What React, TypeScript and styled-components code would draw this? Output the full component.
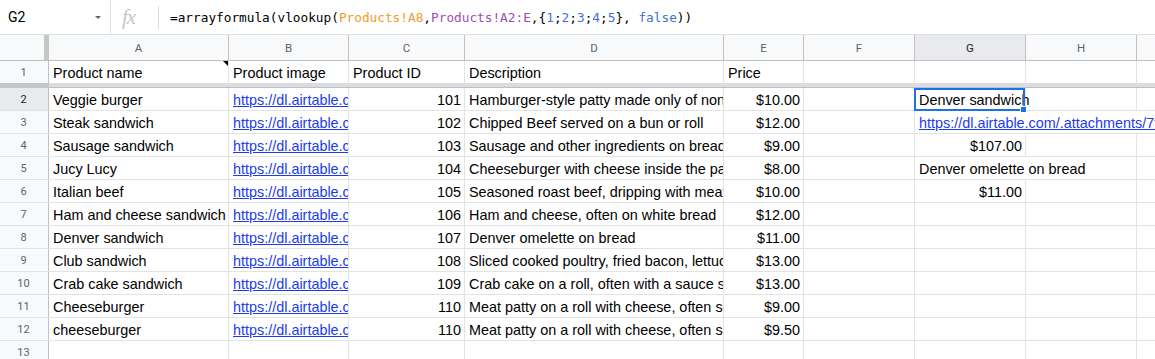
import React from "react";
import styled, { createGlobalStyle } from "styled-components";

const GlobalStyle = createGlobalStyle`
  html, body { margin: 0; padding: 0; background: #fff; overflow: hidden; }
  body { font-family: "Liberation Sans", Arial, sans-serif; }
`;

const Page = styled.div`
  width: 1155px;
  height: 359px;
  overflow: hidden;
  background: #fff;
`;

/* ---------- formula bar ---------- */
const FormulaBar = styled.div`
  display: flex;
  align-items: stretch;
  height: 35px;
  box-sizing: border-box;
  border-bottom: 1px solid #e0e0e0;
`;

const NameBox = styled.div`
  width: 111px;
  flex: none;
  box-sizing: border-box;
  border-right: 1px solid #e0e0e0;
  display: flex;
  align-items: center;
  justify-content: space-between;
  padding: 0 9px 0 8px;
`;

const NameText = styled.span`
  font-family: Roboto, "Liberation Sans", Arial, sans-serif;
  font-size: 14px;
  color: #000;
`;

const FxBox = styled.div`
  width: 47px;
  flex: none;
  display: flex;
  align-items: center;
  padding-left: 11px;
  box-sizing: border-box;
`;

const FxGlyph = styled.span`
  font-family: "Liberation Serif", "DejaVu Serif", serif;
  font-style: italic;
  font-size: 21px;
  color: #c4c7c5;
  letter-spacing: -1px;
  line-height: 1;
`;

const FxDivider = styled.div`
  width: 1px;
  height: 23px;
  align-self: center;
  background: #dadce0;
  flex: none;
`;

const FormulaText = styled.div`
  display: flex;
  align-items: center;
  padding-left: 11px;
  font-family: "DejaVu Sans Mono", "Liberation Mono", monospace;
  font-size: 12.75px;
  color: #000;
  white-space: pre;
`;

const Tok = styled.span<{ $c?: string }>`
  color: ${(p) => p.$c || "#000"};
`;

/* ---------- grid ---------- */
const Sheet = styled.div`
  display: flex;
  flex-direction: column;
  font-size: 14.4px;
  color: #000;
`;

const HeaderRow = styled.div`
  display: flex;
  height: 26px;
  box-sizing: border-box;
  border-bottom: 1px solid #c0c0c0;
  background: #f8f9fa;
`;

const Corner = styled.div`
  width: 49px;
  flex: none;
  box-sizing: border-box;
  border-right: 5px solid #c4c7c5;
`;

const ColHeader = styled.div<{ $w: number; $active?: boolean }>`
  width: ${(p) => p.$w}px;
  flex: none;
  box-sizing: border-box;
  border-right: 1px solid #c0c0c0;
  display: flex;
  align-items: center;
  justify-content: center;
  font-family: Roboto, "Liberation Sans", Arial, sans-serif;
  font-size: 11.5px;
  color: ${(p) => (p.$active ? "#202124" : "#5f6368")};
  background: ${(p) => (p.$active ? "#e8eaed" : "#f8f9fa")};
`;

const Row = styled.div<{ $first?: boolean }>`
  display: flex;
  height: ${(p) => (p.$first ? "22px" : "23px")};
  box-sizing: border-box;
  border-bottom: ${(p) => (p.$first ? "none" : "1px solid #e2e3e3")};
`;

const RowHead = styled.div<{ $active?: boolean }>`
  width: 49px;
  flex: none;
  box-sizing: border-box;
  border-right: 1px solid #c0c0c0;
  background: ${(p) => (p.$active ? "#e8eaed" : "#f8f9fa")};
  color: ${(p) => (p.$active ? "#202124" : "#5f6368")};
  font-family: Roboto, "Liberation Sans", Arial, sans-serif;
  font-size: 11px;
  display: flex;
  align-items: center;
  justify-content: center;
  padding-right: 1px;
`;

const Cell = styled.div<{
  $w: number;
  $right?: boolean;
  $spill?: boolean;
  $noRight?: boolean;
}>`
  width: ${(p) => p.$w}px;
  flex: none;
  box-sizing: border-box;
  height: 100%;
  position: relative;
  border-right: 1px solid ${(p) => (p.$noRight ? "transparent" : "#e2e3e3")};
  padding: 2px 3px 0 4px;
  display: flex;
  align-items: center;
  justify-content: ${(p) => (p.$right ? "flex-end" : "flex-start")};
  overflow: ${(p) => (p.$spill ? "visible" : "hidden")};
  white-space: nowrap;
  z-index: ${(p) => (p.$spill ? 1 : 0)};
`;

const CellText = styled.span`
  flex: none;
`;

const LinkText = styled.span`
  flex: none;
  color: #1a3bf0;
  text-decoration: underline;
`;

const NoteMark = styled.span`
  position: absolute;
  top: 0;
  right: -1px;
  width: 0;
  height: 0;
  border-left: 6px solid transparent;
  border-top: 6px solid #000;
`;

const SelectionBox = styled.span`
  position: absolute;
  top: 0;
  left: -1px;
  right: 0;
  bottom: -1px;
  border: 2px solid #1a73e8;
  pointer-events: none;
`;

const FillHandle = styled.span`
  position: absolute;
  right: -4px;
  bottom: -4px;
  width: 5px;
  height: 5px;
  background: #1a73e8;
  border: 1px solid #fff;
`;

const FrozenBar = styled.div`
  display: flex;
  height: 5px;
`;

const FrozenHead = styled.div`
  width: 49px;
  flex: none;
  background: #c4c7c5;
`;

const FrozenRest = styled.div`
  flex: 1;
  box-sizing: border-box;
  background: #dadce0;
  border-bottom: 1px solid #bdc1c6;
`;

/* ---------- data ---------- */
const COLS = ["A", "B", "C", "D", "E", "F", "G", "H", "I"];
const W = [180, 120, 116, 259, 80, 111, 111, 111, 111];
const LINK = "https://dl.airtable.com/.attachments/6b1c0e5";

type Prod = [string, string, string, string];
const PRODUCTS: Prod[] = [
  ["Veggie burger", "101", "Hamburger-style patty made only of non-meat ingredients", "$10.00"],
  ["Steak sandwich", "102", "Chipped Beef served on a bun or roll", "$12.00"],
  ["Sausage sandwich", "103", "Sausage and other ingredients on bread", "$9.00"],
  ["Jucy Lucy", "104", "Cheeseburger with cheese inside the patty", "$8.00"],
  ["Italian beef", "105", "Seasoned roast beef, dripping with meat juices", "$10.00"],
  ["Ham and cheese sandwich", "106", "Ham and cheese, often on white bread", "$12.00"],
  ["Denver sandwich", "107", "Denver omelette on bread", "$11.00"],
  ["Club sandwich", "108", "Sliced cooked poultry, fried bacon, lettuce, tomato", "$13.00"],
  ["Crab cake sandwich", "109", "Crab cake on a roll, often with a sauce such as tartar", "$13.00"],
  ["Cheeseburger", "110", "Meat patty on a roll with cheese, often served with fries", "$9.00"],
  ["cheeseburger", "110", "Meat patty on a roll with cheese, often served with fries", "$9.50"],
];

type GVal = { text: string; link?: boolean; right?: boolean; spill?: number; selected?: boolean };
const GCOL: Record<number, GVal> = {
  2: { text: "Denver sandwich", spill: 1, selected: true },
  3: { text: "https://dl.airtable.com/.attachments/7f2b9c1d0e", link: true, spill: 3 },
  4: { text: "$107.00", right: true },
  5: { text: "Denver omelette on bread", spill: 1 },
  6: { text: "$11.00", right: true },
};

const Caret = () => (
  <svg width="6" height="3" viewBox="0 0 6 3">
    <path d="M0 0 L6 0 L3 3 Z" fill="#5f6368" />
  </svg>
);

const ORANGE = "#f09a2b";
const PURPLE = "#9c4fae";
const BLUE = "#3f72d6";

function TailCells({ rowNum }: { rowNum: number }) {
  const g = GCOL[rowNum];
  const spill = g?.spill ?? 0;
  return (
    <>
      <Cell $w={W[6]} $right={g?.right} $spill={spill > 0} $noRight={spill > 0 && !g?.selected}>
        {g &&
          (g.link ? <LinkText>{g.text}</LinkText> : <CellText>{g.text}</CellText>)}
        {g?.selected && (
          <SelectionBox>
            <FillHandle />
          </SelectionBox>
        )}
      </Cell>
      <Cell $w={W[7]} $noRight={spill > 1} />
      <Cell $w={W[8]} />
    </>
  );
}

export default function App() {
  return (
    <Page>
      <GlobalStyle />
      <FormulaBar>
        <NameBox>
          <NameText>G2</NameText>
          <Caret />
        </NameBox>
        <FxBox>
          <FxGlyph>fx</FxGlyph>
        </FxBox>
        <FxDivider />
        <FormulaText>
          <Tok>=arrayformula(vlookup(</Tok>
          <Tok $c={ORANGE}>Products!A8</Tok>
          <Tok>,</Tok>
          <Tok $c={PURPLE}>Products!A2:E</Tok>
          <Tok>,{"{"}</Tok>
          <Tok $c={BLUE}>1</Tok>
          <Tok>;</Tok>
          <Tok $c={BLUE}>2</Tok>
          <Tok>;</Tok>
          <Tok $c={BLUE}>3</Tok>
          <Tok>;</Tok>
          <Tok $c={BLUE}>4</Tok>
          <Tok>;</Tok>
          <Tok $c={BLUE}>5</Tok>
          <Tok>{"}"}, </Tok>
          <Tok $c={BLUE}>false</Tok>
          <Tok>))</Tok>
        </FormulaText>
      </FormulaBar>

      <Sheet>
        <HeaderRow>
          <Corner />
          {COLS.map((c, i) => (
            <ColHeader key={c} $w={W[i]} $active={c === "G"}>
              {c}
            </ColHeader>
          ))}
        </HeaderRow>

        <Row $first>
          <RowHead>1</RowHead>
          <Cell $w={W[0]}>
            <CellText>Product name</CellText>
            <NoteMark />
          </Cell>
          <Cell $w={W[1]}>
            <CellText>Product image</CellText>
          </Cell>
          <Cell $w={W[2]}>
            <CellText>Product ID</CellText>
          </Cell>
          <Cell $w={W[3]}>
            <CellText>Description</CellText>
          </Cell>
          <Cell $w={W[4]}>
            <CellText>Price</CellText>
          </Cell>
          <Cell $w={W[5]} />
          <TailCells rowNum={1} />
        </Row>

        <FrozenBar>
          <FrozenHead />
          <FrozenRest />
        </FrozenBar>

        {PRODUCTS.map((p, idx) => {
          const rowNum = idx + 2;
          return (
            <Row key={rowNum}>
              <RowHead $active={rowNum === 2}>{rowNum}</RowHead>
              <Cell $w={W[0]}>
                <CellText>{p[0]}</CellText>
              </Cell>
              <Cell $w={W[1]}>
                <LinkText>{LINK}</LinkText>
              </Cell>
              <Cell $w={W[2]} $right>
                <CellText>{p[1]}</CellText>
              </Cell>
              <Cell $w={W[3]}>
                <CellText>{p[2]}</CellText>
              </Cell>
              <Cell $w={W[4]} $right>
                <CellText>{p[3]}</CellText>
              </Cell>
              <Cell $w={W[5]} />
              <TailCells rowNum={rowNum} />
            </Row>
          );
        })}

        <Row>
          <RowHead>13</RowHead>
          {W.map((w, i) => (
            <Cell key={i} $w={w} />
          ))}
        </Row>
      </Sheet>
    </Page>
  );
}
